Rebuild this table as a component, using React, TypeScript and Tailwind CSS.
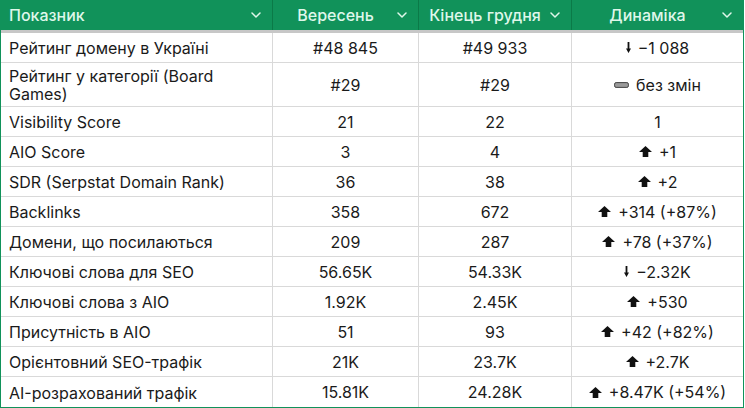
import React from 'react';

type Trend = 'up' | 'down' | 'flat' | 'none';

const rows: { name: string; sep: string; dec: string; trend: Trend; delta: string; tall?: boolean }[] = [
  { name: 'Рейтинг домену в Україні', sep: '#48 845', dec: '#49 933', trend: 'down', delta: '−1 088' },
  { name: 'Рейтинг у категорії (Board Games)', sep: '#29', dec: '#29', trend: 'flat', delta: 'без змін', tall: true },
  { name: 'Visibility Score', sep: '21', dec: '22', trend: 'none', delta: '1' },
  { name: 'AIO Score', sep: '3', dec: '4', trend: 'up', delta: '+1' },
  { name: 'SDR (Serpstat Domain Rank)', sep: '36', dec: '38', trend: 'up', delta: '+2' },
  { name: 'Backlinks', sep: '358', dec: '672', trend: 'up', delta: '+314 (+87%)' },
  { name: 'Домени, що посилаються', sep: '209', dec: '287', trend: 'up', delta: '+78 (+37%)' },
  { name: 'Ключові слова для SEO', sep: '56.65K', dec: '54.33K', trend: 'down', delta: '−2.32K' },
  { name: 'Ключові слова з AIO', sep: '1.92K', dec: '2.45K', trend: 'up', delta: '+530' },
  { name: 'Присутність в AIO', sep: '51', dec: '93', trend: 'up', delta: '+42 (+82%)' },
  { name: 'Орієнтовний SEO-трафік', sep: '21K', dec: '23.7K', trend: 'up', delta: '+2.7K' },
  { name: 'AI-розрахований трафік', sep: '15.81K', dec: '24.28K', trend: 'up', delta: '+8.47K (+54%)' },
];

const Chevron = () => (
  <svg width="10" height="6" viewBox="0 0 10 6" className="shrink-0">
    <polyline points="1,1 5,5 9,1" fill="none" stroke="#dff7ea" strokeWidth="1.5" strokeLinecap="round" strokeLinejoin="round" />
  </svg>
);

const TrendIcon = ({ trend }: { trend: Trend }) => {
  if (trend === 'up')
    return (
      <svg width="13" height="11" viewBox="0 0 13 11" className="shrink-0">
        <path d="M6.5 0 L13 6 L9.3 6 L9.3 11 L3.7 11 L3.7 6 L0 6 Z" fill="#111" />
      </svg>
    );
  if (trend === 'down')
    return (
      <svg width="5" height="11" viewBox="0 0 5 11" className="shrink-0">
        <path d="M1.6 0 L3.4 0 L3.4 6.5 L5 6.5 L2.5 11 L0 6.5 L1.6 6.5 Z" fill="#111" />
      </svg>
    );
  if (trend === 'flat')
    return (
      <svg width="15" height="6" viewBox="0 0 15 6" className="shrink-0">
        <rect x="0.6" y="0.6" width="13.8" height="4.8" rx="1.5" fill="#9a9a9a" stroke="#444" strokeWidth="1" />
      </svg>
    );
  return null;
};

export default function App() {
  return (
    <div className="w-[745px] h-[408px] bg-white" style={{ fontFamily: 'Inter, "Noto Sans", sans-serif' }}>
      <div className="w-[744px] border-l border-r border-b border-[#11925a] text-[16px] text-[#1a1a1a]">
        {/* header */}
        <div className="grid grid-cols-[272px_146px_153px_171px] h-[33px] bg-[#11925a] border-b-[3px] border-[#c7c7c7] text-[#dff7ea] font-medium">
          <div className="flex items-center pl-[8px] pr-[11px] border-r border-[#0b7a48]">
            <span className="flex-1">Показник</span>
            <Chevron />
          </div>
          <div className="flex items-center pr-[11px] border-r border-[#0b7a48]">
            <span className="flex-1 text-center pl-[1px]">Вересень</span>
            <Chevron />
          </div>
          <div className="flex items-center pr-[11px] border-r border-[#0b7a48]">
            <span className="flex-1 text-center pl-[1px]">Кінець грудня</span>
            <Chevron />
          </div>
          <div className="flex items-center pr-[11px]">
            <span className="flex-1 text-center pl-[1px]">Динаміка</span>
            <Chevron />
          </div>
        </div>

        {rows.map((r, i) => (
          <div
            key={r.name}
            className={`grid grid-cols-[272px_146px_153px_171px] ${r.tall ? 'h-[44px]' : 'h-[30px]'} ${i === rows.length - 1 ? '' : 'border-b border-[#d9d9d9]'}`}
          >
            <div className="flex items-center pl-[8px] pr-[8px] border-r border-[#d9d9d9] leading-[18px]">
              <span className="pt-[1px]">{r.name}</span>
            </div>
            <div className="flex items-center justify-center border-r border-[#d9d9d9]">{r.sep}</div>
            <div className="flex items-center justify-center border-r border-[#d9d9d9]">{r.dec}</div>
            <div className="flex items-center justify-center gap-[7px]">
              <TrendIcon trend={r.trend} />
              <span>{r.delta}</span>
            </div>
          </div>
        ))}
      </div>
    </div>
  );
}
